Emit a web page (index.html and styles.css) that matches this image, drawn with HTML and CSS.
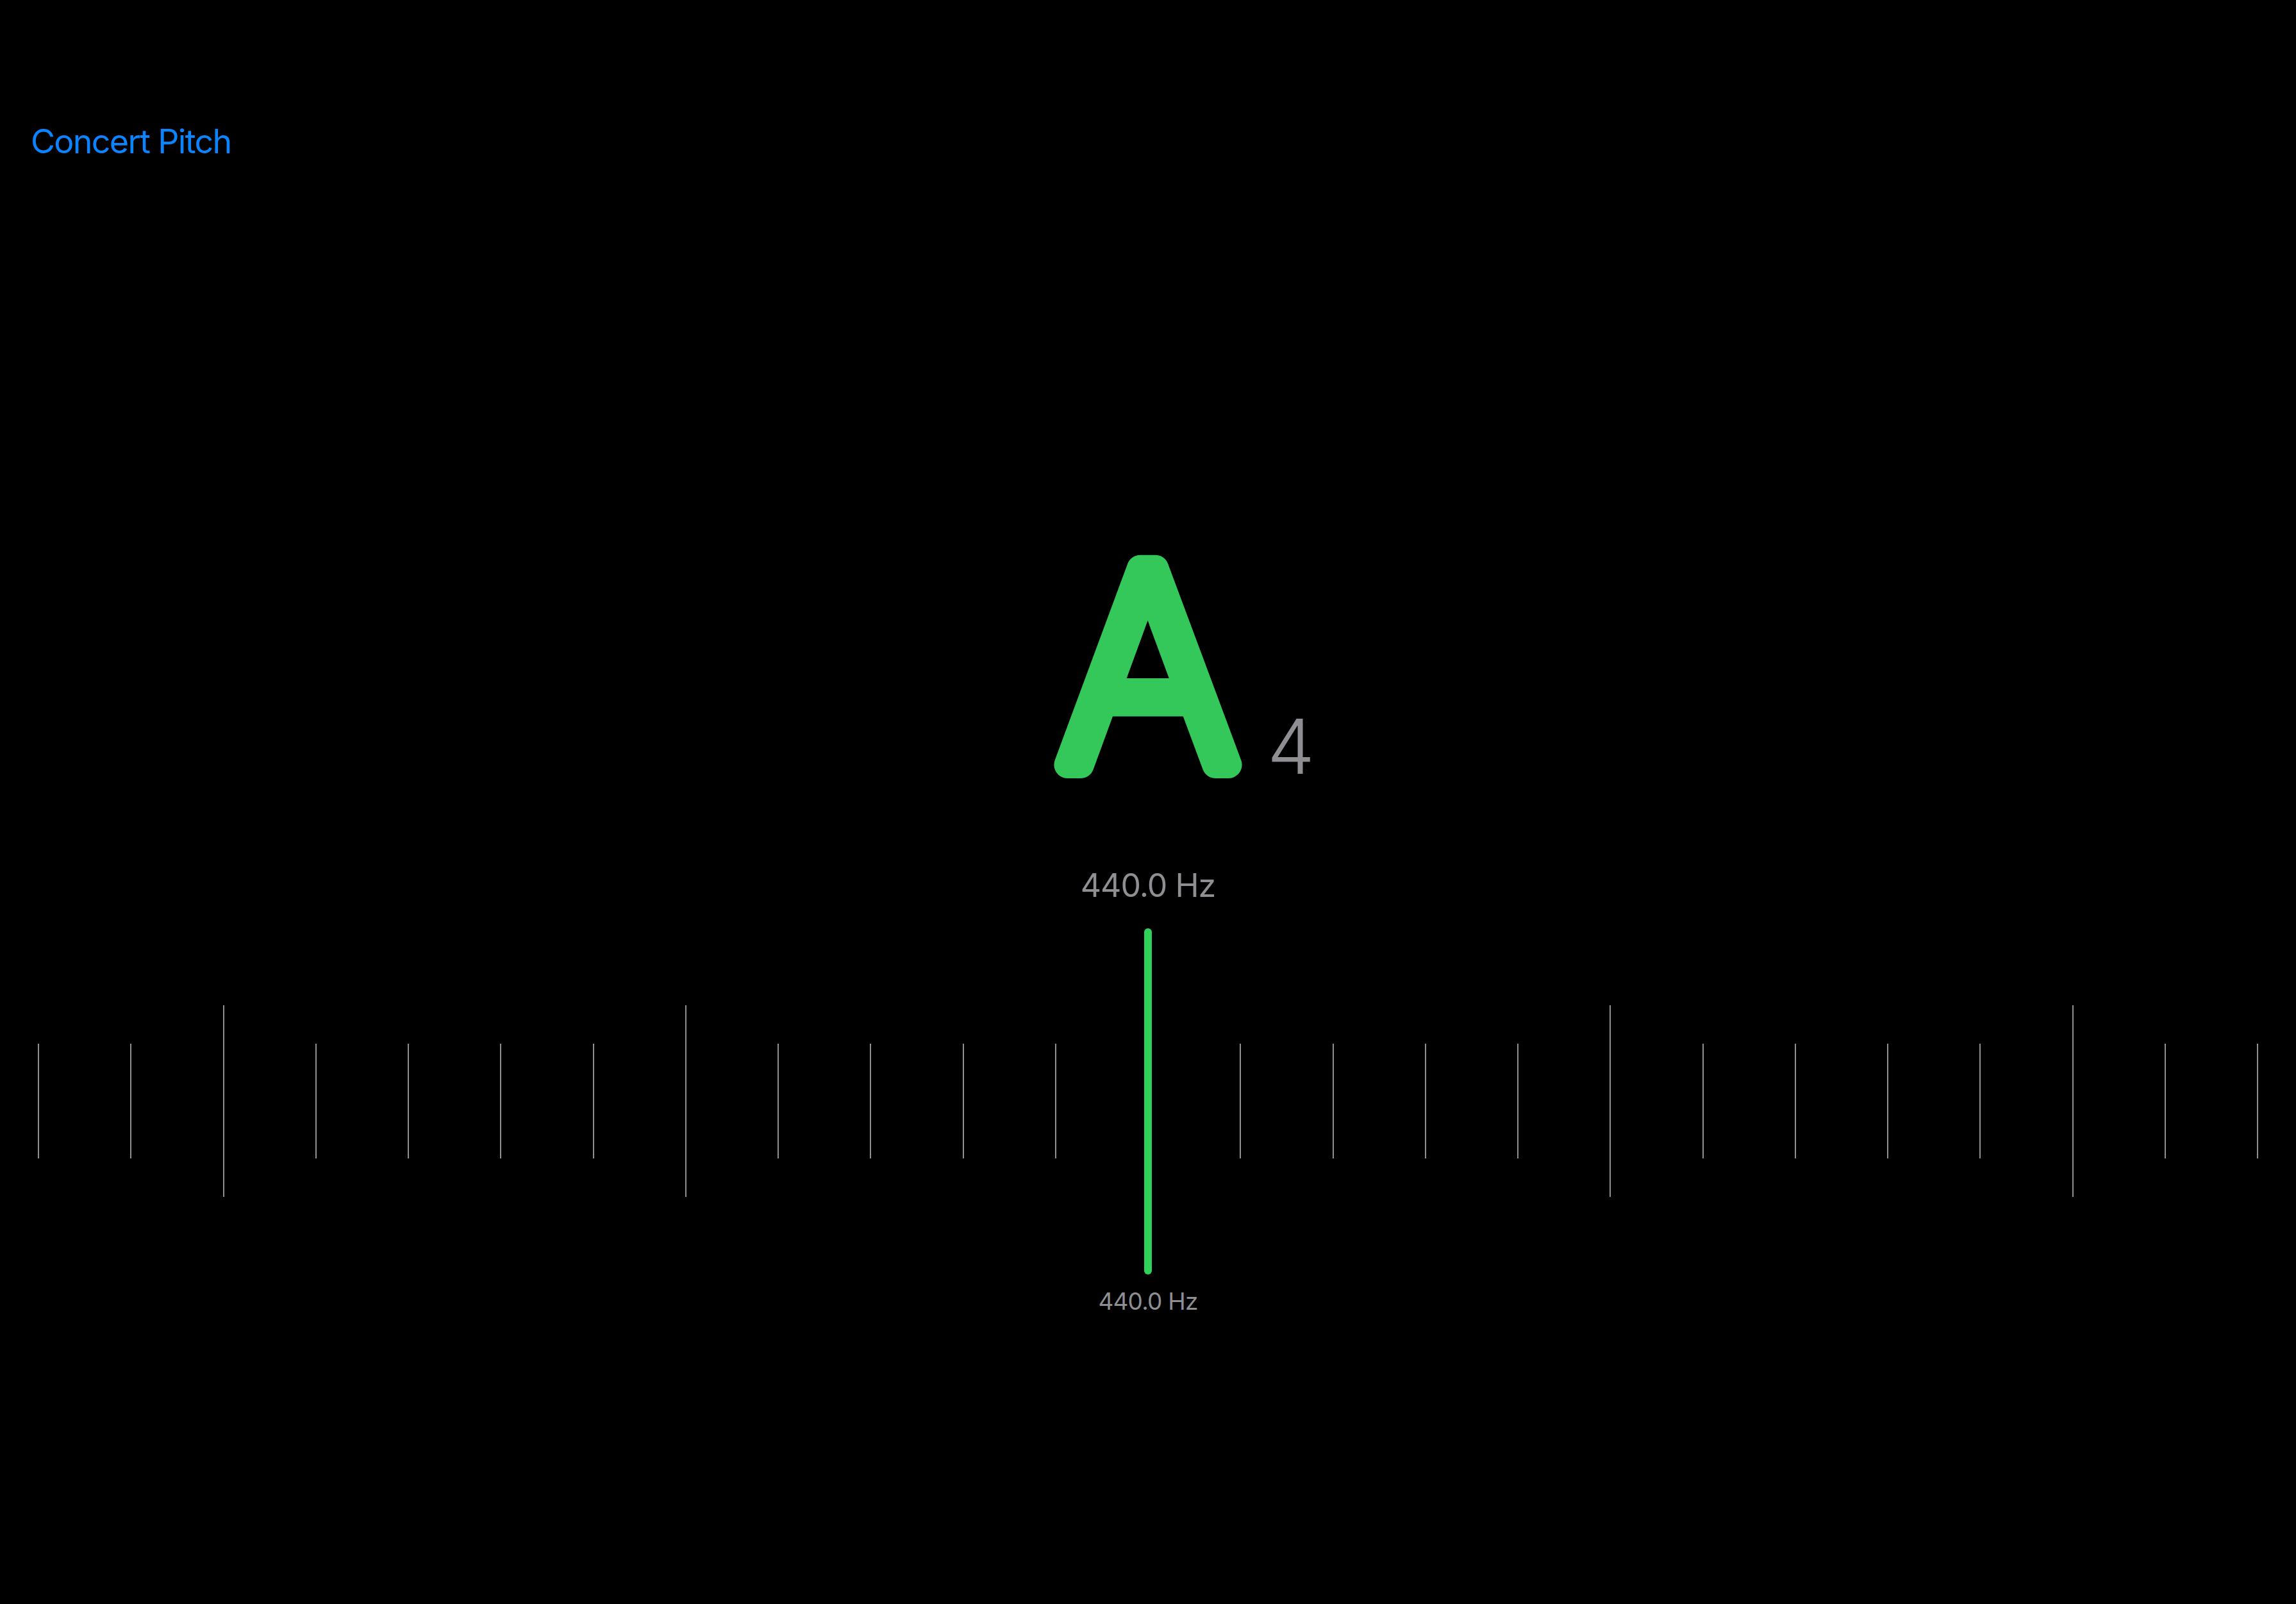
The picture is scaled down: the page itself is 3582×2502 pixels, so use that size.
FILE: index.html
```html
<!DOCTYPE html>
<html lang="en">
<head>
    <meta charset="UTF-8">
    <meta name="viewport" content="width=device-width, initial-scale=1.0">
    <title>Tuner</title>
    <link rel="stylesheet" href="styles.css">
</head>
<body>

<div class="app">
    <div class="topbar">
        <a class="concert-pitch" href="#">Concert Pitch</a>
    </div>

    <div class="note">
        <div></div>
        <svg class="note-letter" viewBox="0 0 340 390" width="340" height="390">
            <text x="170" y="353" text-anchor="middle">A</text>
        </svg>
        <div class="octave">4</div>
    </div>

    <div class="frequency">440.0 Hz</div>

    <div class="meter">
        <div class="ticks">
            <div class="tick"></div>
            <div class="tick"></div>
            <div class="tick long"></div>
            <div class="tick"></div>
            <div class="tick"></div>
            <div class="tick"></div>
            <div class="tick"></div>
            <div class="tick long"></div>
            <div class="tick"></div>
            <div class="tick"></div>
            <div class="tick"></div>
            <div class="tick"></div>
            <div class="tick long"></div>
            <div class="tick"></div>
            <div class="tick"></div>
            <div class="tick"></div>
            <div class="tick"></div>
            <div class="tick long"></div>
            <div class="tick"></div>
            <div class="tick"></div>
            <div class="tick"></div>
            <div class="tick"></div>
            <div class="tick long"></div>
            <div class="tick"></div>
            <div class="tick"></div>
        </div>
        <div class="needle"></div>
    </div>

    <div class="target">440.0 Hz</div>
</div>

</body>
</html>
```

FILE: styles.css
```css
body {
    margin: 0;
    padding: 0;
    background-color: #000;
    font-family: Inter, "Noto Sans", sans-serif;
}
.app {
    width: 3582px;
    height: 2502px;
    display: flex;
    flex-direction: column;
}
.topbar {
    padding: 195px 0 0 48px;
    line-height: 1;
}
.concert-pitch {
    color: #0a84ff;
    font-size: 52px;
    letter-spacing: -1.7px;
    text-decoration: none;
}
.note {
    margin-top: 593px;
    display: grid;
    grid-template-columns: 1fr auto 1fr;
}
.note-letter {
    display: block;
    overflow: visible;
}
.note-letter text {
    font-family: Inter, sans-serif;
    font-size: 421px;
    font-weight: 200;
    fill: #34c759;
    stroke: #34c759;
    stroke-width: 42;
    stroke-linejoin: round;
}
.octave {
    align-self: end;
    padding-left: 16px;
    margin-bottom: 7px;
    color: #8e8e93;
    font-size: 118px;
    font-weight: 300;
    line-height: 1;
}
.frequency {
    margin-top: 126px;
    text-align: center;
    color: #8e8e93;
    font-size: 50px;
    letter-spacing: -1px;
    line-height: 1;
}
.meter {
    position: relative;
    flex-shrink: 0;
    margin-top: 42px;
    height: 540px;
}
.ticks {
    margin-top: 120px;
    height: 299px;
    padding: 0 59px;
    display: flex;
    justify-content: space-between;
    align-items: center;
}
.tick {
    width: 2px;
    height: 179px;
    background-color: #8e8e93;
}
.tick.long {
    height: 299px;
}
.needle {
    position: absolute;
    top: 0;
    left: 50%;
    width: 12px;
    height: 540px;
    margin-left: -6px;
    border-radius: 6px;
    background-color: #30d158;
}
.target {
    margin-top: 23px;
    text-align: center;
    color: #8e8e93;
    font-size: 37px;
    letter-spacing: -0.8px;
    line-height: 1;
}
```
